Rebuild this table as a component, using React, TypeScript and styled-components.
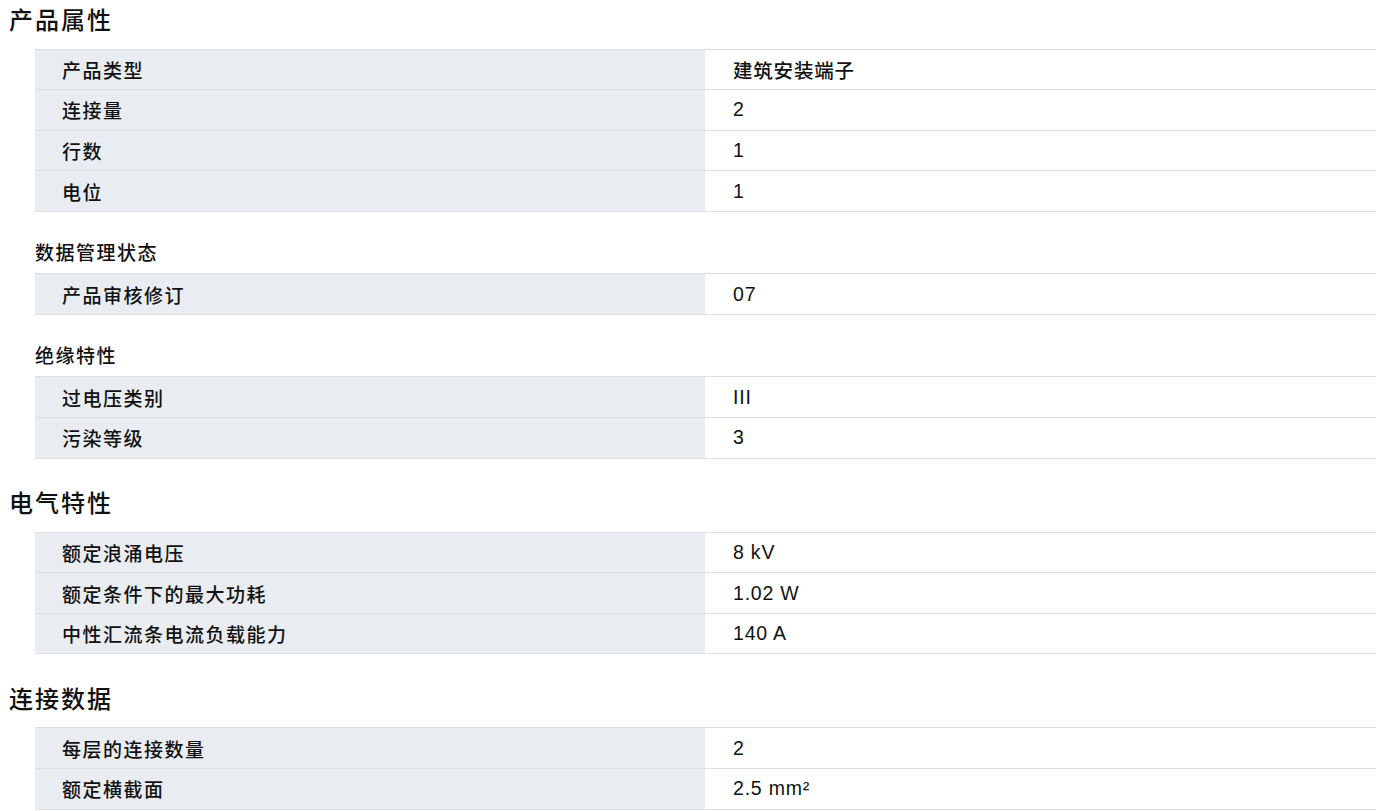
import * as React from "react"
import styled, { createGlobalStyle } from "styled-components"

const GlobalStyle = createGlobalStyle`
  html, body {
    margin: 0;
    padding: 0;
    background: #ffffff;
  }
  body {
    font-family: "Liberation Sans", "Noto Sans CJK SC", Arial, sans-serif;
    color: #111111;
  }
`

const Page = styled.div`
  padding: 6px 3px 0 9px;
`

const SectionTitle = styled.h2`
  margin: 30.5px 0 12.5px;
  font-size: 24px;
  line-height: 30px;
  font-weight: 500;
  letter-spacing: 2px;
  color: #111111;

  &:first-child {
    margin-top: 0;
  }
`

const Body = styled.div`
  padding-left: 26px;
`

const GroupTitle = styled.div`
  margin: 30.5px 0 7px;
  font-size: 19px;
  line-height: 24px;
  font-weight: 500;
  letter-spacing: 1.5px;
  color: #111111;
`

const Table = styled.div`
  border-top: 1px solid #dcdfe2;
`

const Row = styled.div`
  display: grid;
  grid-template-columns: 670px 1fr;
  height: 40.6px;
  box-sizing: border-box;
  border-bottom: 1px solid #dcdfe2;
`

const Cell = styled.div<{ $label?: boolean }>`
  display: flex;
  align-items: center;
  padding-left: ${(p) => (p.$label ? "27px" : "28px")};
  background: ${(p) => (p.$label ? "#e9edf1" : "#ffffff")};
  font-size: ${(p) => (p.$label ? "19px" : "19.5px")};
  font-weight: 500;
  letter-spacing: ${(p) => (p.$label ? "1.5px" : "0.8px")};
  color: #111111;
  white-space: nowrap;
`

type Pair = [string, string]

interface Group {
  title?: string
  rows: Pair[]
}

interface Section {
  title: string
  groups: Group[]
}

const sections: Section[] = [
  {
    title: "产品属性",
    groups: [
      {
        rows: [
          ["产品类型", "建筑安装端子"],
          ["连接量", "2"],
          ["行数", "1"],
          ["电位", "1"],
        ],
      },
      { title: "数据管理状态", rows: [["产品审核修订", "07"]] },
      {
        title: "绝缘特性",
        rows: [
          ["过电压类别", "III"],
          ["污染等级", "3"],
        ],
      },
    ],
  },
  {
    title: "电气特性",
    groups: [
      {
        rows: [
          ["额定浪涌电压", "8 kV"],
          ["额定条件下的最大功耗", "1.02 W"],
          ["中性汇流条电流负载能力", "140 A"],
        ],
      },
    ],
  },
  {
    title: "连接数据",
    groups: [
      {
        rows: [
          ["每层的连接数量", "2"],
          ["额定横截面", "2.5 mm²"],
        ],
      },
    ],
  },
]

const App: React.FC = () => {
  return (
    <>
      <GlobalStyle />
      <Page>
        {sections.map((section) => (
          <React.Fragment key={section.title}>
            <SectionTitle>{section.title}</SectionTitle>
            <Body>
              {section.groups.map((group, gi) => (
                <React.Fragment key={gi}>
                  {group.title && <GroupTitle>{group.title}</GroupTitle>}
                  <Table>
                    {group.rows.map(([label, value]) => (
                      <Row key={label}>
                        <Cell $label>{label}</Cell>
                        <Cell>{value}</Cell>
                      </Row>
                    ))}
                  </Table>
                </React.Fragment>
              ))}
            </Body>
          </React.Fragment>
        ))}
      </Page>
    </>
  )
}

export default App
